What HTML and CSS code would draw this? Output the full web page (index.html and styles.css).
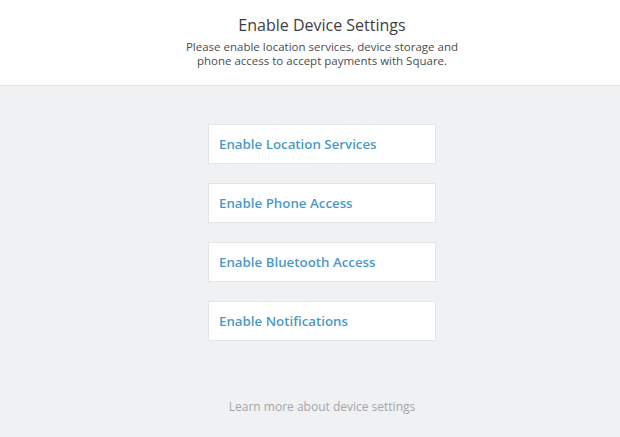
FILE: index.html
```html
<!DOCTYPE html>
<html lang="en">
<head>
<meta charset="UTF-8" />
<meta name="viewport" content="width=device-width, initial-scale=1" />
<title>Enable Device Settings</title>
<link rel="stylesheet" href="styles.css">
</head>
<body>
<div class="header">
  <h2>Enable Device Settings</h2>
  <p>Please enable location services, device storage and<br>phone access to accept payments with Square.</p>
</div>

<div class="content">
  <div class="options">
    <button class="option">Enable Location Services</button>
    <button class="option">Enable Phone Access</button>
    <button class="option">Enable Bluetooth Access</button>
    <button class="option">Enable Notifications</button>
  </div>
  <a class="learn" href="#">Learn more about device settings</a>
</div>
</body>
</html>
```

FILE: styles.css
```css
body {
  font-family: "Open Sans", Arial, sans-serif;
  margin: 0;
  background-color: #f0f1f3;
  height: 437px;
  display: flex;
  flex-direction: column;
}

.header {
  background-color: white;
  border-bottom: 1px solid #e2e3e5;
  height: 86px;
  box-sizing: border-box;
  padding: 14px 0 0 24px;
  text-align: center;
}

h2 {
  margin: 0;
  font-size: 16px;
  font-weight: 500;
  color: #3d4043;
  line-height: 22px;
}

.header p {
  margin: 4px 0 0;
  font-size: 11.5px;
  line-height: 14px;
  color: #4a4d50;
}

.content {
  flex: 1;
  display: flex;
  flex-direction: column;
  align-items: center;
  padding: 38px 0 0 24px;
}

.options {
  display: flex;
  flex-direction: column;
  gap: 19px;
  width: 228px;
}

.option {
  height: 40px;
  background-color: white;
  border: 1px solid #e4e5e7;
  text-align: left;
  padding: 0 10px;
  font-family: inherit;
  font-size: 13.3px;
  font-weight: 600;
  color: #4c9ac3;
  cursor: pointer;
}

.learn {
  margin-top: 57px;
  font-size: 12px;
  font-weight: 500;
  color: #a3a6aa;
  text-decoration: none;
}
```
